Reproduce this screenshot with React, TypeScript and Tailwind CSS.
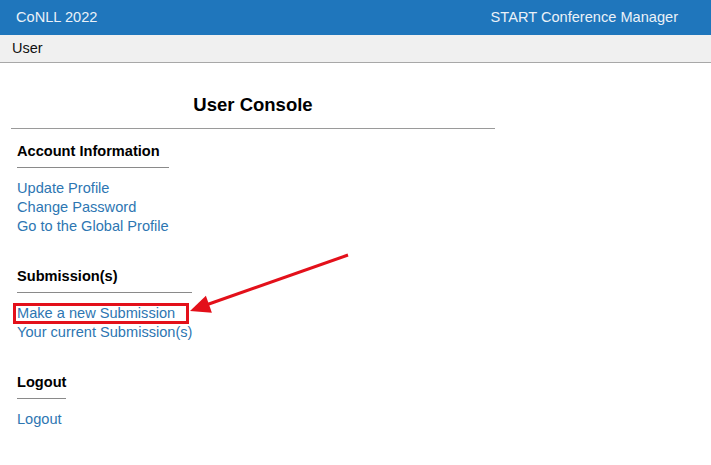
import React from "react";

const linkCls = "block text-[14.6px] leading-[19px] text-[#2d76b2] no-underline";

function Section({ title, links, mt }: { title: string; links: React.ReactNode[]; mt: string }) {
  return (
    <div className={`w-fit ${mt}`}>
      <div className="text-[14.6px] leading-[19px] font-bold text-black pb-[6px] border-b border-[#8a8a8a]">{title}</div>
      <div className="mt-[11px]">{links}</div>
    </div>
  );
}

export default function App() {
  return (
    <div className="relative w-[711px] h-[465px] bg-white overflow-hidden" style={{ fontFamily: '"Liberation Sans", Arial, sans-serif' }}>
      <div className="h-[35px] bg-[#1f76bc] flex items-center justify-between pl-[16px] pr-[33px] text-[14.6px] text-[#eaf1f8]">
        <span>CoNLL 2022</span>
        <span>START Conference Manager</span>
      </div>
      <div className="h-[28px] bg-[#f0f0f0] border-b border-[#a8a8a8] flex items-center pl-[12px] text-[14.5px] text-[#111]">
        User
      </div>
      <div className="pl-[11px]">
        <div className="w-[484px]">
          <div className="mt-[31px] pb-[12px] border-b border-[#9a9a9a] text-center text-[18.5px] leading-[22px] font-bold text-black">
            User Console
          </div>
          <div className="pl-[6px]">
            <Section
              mt="mt-[13px]"
              title="Account Information"
              links={[
                <a key="1" className={linkCls}>Update Profile</a>,
                <a key="2" className={linkCls}>Change Password</a>,
                <a key="3" className={linkCls}>Go to the Global Profile</a>,
              ]}
            />
            <Section
              mt="mt-[31px]"
              title="Submission(s)"
              links={[
                <div key="1" className="relative">
                  <a className={linkCls}>Make a new Submission</a>
                  <div className="absolute left-[-4px] top-[-1px] w-[176px] h-[21px] border-[3px] border-[#e3101a] pointer-events-none" />
                </div>,
                <a key="2" className={linkCls}>Your current Submission(s)</a>,
              ]}
            />
            <Section
              mt="mt-[31px]"
              title="Logout"
              links={[<a key="1" className={linkCls}>Logout</a>]}
            />
          </div>
        </div>
      </div>
      <svg className="absolute left-0 top-0 pointer-events-none" width="711" height="465" viewBox="0 0 711 465">
        <line x1="348" y1="255" x2="206" y2="305" stroke="#e3101a" strokeWidth="3" />
        <polygon points="190,311 205.9,295.8 211.9,312.8" fill="#e3101a" />
      </svg>
    </div>
  );
}
